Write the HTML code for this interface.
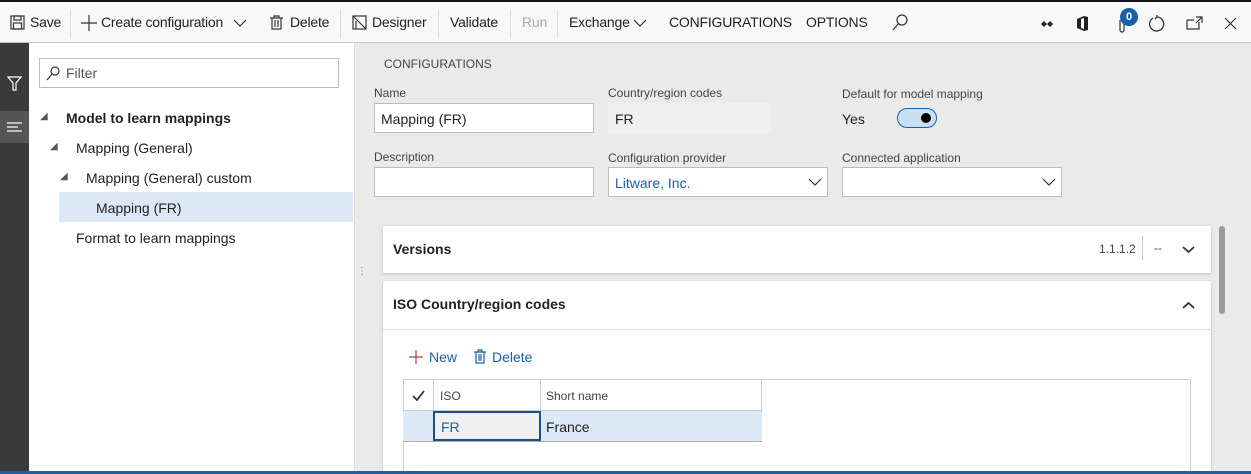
<!DOCTYPE html><html><head><style>
*{box-sizing:border-box;margin:0;padding:0}
body{width:1251px;height:474px;overflow:hidden;font-family:"Liberation Sans",sans-serif;font-size:14px;color:#222;background:#eaeaea;position:relative}
.a{position:absolute}
.tb{left:0;top:0;width:1251px;height:43px;background:#f8f8f8;border-top:2px solid #111;border-bottom:1px solid #c8c8c8}
.tb span{position:absolute;top:12px;font-size:14px;color:#222;letter-spacing:-.2px}
.tb svg{position:absolute}
.sep{position:absolute;top:8px;width:1px;height:28px;background:#ddd}
.lbl{font-size:12px;color:#444}
.inp{background:#fff;border:1px solid #bbb;height:30px;font-size:14px;padding:7px 6px}
.card{background:#fff;box-shadow:0 1px 3px rgba(0,0,0,.2)}
svg{fill:none;stroke:#333;stroke-width:1.2}
</style></head><body>
<div class="a tb">
<svg style="left:10px;top:13px" width="15" height="15"><rect x="1" y="1" width="13" height="13"/><rect x="4" y="1" width="7" height="4"/><rect x="3.5" y="8" width="8" height="6"/></svg><span style="left:30px">Save</span>
<div class="sep" style="left:70px"></div>
<svg style="left:81px;top:13px" width="16" height="16"><path d="M8 0V16M0 8H16"/></svg><span style="left:101px">Create configuration</span>
<svg style="left:233px;top:17px" width="14" height="8"><path d="M1 1L7 7L13 1"/></svg>
<svg style="left:270px;top:13px" width="13" height="15"><path d="M0 3H13M4 3V1H9V3M2 3V14H11V3M5 5V12M8 5V12"/></svg><span style="left:290px">Delete</span>
<div class="sep" style="left:340px"></div>
<svg style="left:352px;top:13px" width="15" height="15"><rect x="1" y="1" width="13" height="13"/><path d="M1 1L14 14M4 14V6"/></svg><span style="left:372px">Designer</span>
<div class="sep" style="left:438px"></div>
<span style="left:450px">Validate</span>
<div class="sep" style="left:510px"></div>
<span style="left:522px;color:#aaa">Run</span>
<div class="sep" style="left:557px"></div>
<span style="left:569px">Exchange</span>
<svg style="left:633px;top:17px" width="14" height="8"><path d="M1 1L7 7L13 1"/></svg>
<span style="left:669px">CONFIGURATIONS</span>
<span style="left:806px">OPTIONS</span>
<svg style="left:892px;top:12px" width="16" height="18"><circle cx="10" cy="6" r="5"/><path d="M6.5 9.5L1 16"/></svg>
<svg style="left:1040px;top:17px" width="14" height="10" style="stroke:none"><path d="M1 5L4 2L7 5L4 8Z M7 5L10 2L13 5L10 8Z" fill="#222" stroke="none"/></svg>
<svg style="left:1076px;top:13px" width="13" height="17"><path d="M1 4L8 1L12 2V15L8 16L1 13Z" fill="#222" stroke="none"/><path d="M5 4V13L8 14V3Z" fill="#fff" stroke="none"/></svg>
<svg style="left:1117px;top:14px" width="10" height="18"><path d="M3 4V14A2 2 0 0 0 7 14V4"/></svg>
<div class="a" style="left:1120px;top:6px;width:18px;height:18px;border-radius:9px;background:#1a5fa8;color:#fff;font-size:11px;text-align:center;line-height:18px;font-weight:bold">0</div>
<svg style="left:1148px;top:13px" width="18" height="18"><path d="M5 3A7 7 0 1 0 9 2M9 2L9 0M9 2L7 4" stroke-width="1.3"/></svg>
<svg style="left:1186px;top:14px" width="17" height="14"><path d="M1 4V13H13V6M1 4H8M10 1H16V7M16 1L10 7"/></svg>
<svg style="left:1224px;top:15px" width="13" height="13"><path d="M1 1L12 12M12 1L1 12"/></svg>
</div>
<div class="a" style="left:0;top:43px;width:29px;height:431px;background:#3a3a3a"></div>
<div class="a" style="left:0;top:111px;width:29px;height:32px;background:#555"></div>
<svg class="a" style="left:7px;top:76px;stroke:#fff" width="15" height="15"><path d="M1 1H14L9 7V14H6V7Z"/></svg>
<svg class="a" style="left:7px;top:122px;stroke:#fff" width="15" height="10"><path d="M0 1H15M0 5H11M0 9H15"/></svg>
<div class="a" style="left:29px;top:43px;width:325px;height:431px;background:#fff"></div>
<div class="a inp" style="left:39px;top:58px;width:300px;padding:6px 8px 6px 26px;color:#555">Filter</div>
<svg class="a" style="left:46px;top:66px" width="14" height="15"><circle cx="9" cy="5" r="4"/><path d="M6 8L1 14"/></svg>
<div class="a" style="left:59px;top:192px;width:294px;height:30px;background:#dce8f5"></div>
<div class="a" style="left:40px;top:111px;font-size:10px;color:#555">&#9698;</div><div class="a" style="left:66px;top:110px;font-weight:bold">Model to learn mappings</div>
<div class="a" style="left:50px;top:141px;font-size:10px;color:#555">&#9698;</div><div class="a" style="left:76px;top:140px">Mapping (General)</div>
<div class="a" style="left:60px;top:171px;font-size:10px;color:#555">&#9698;</div><div class="a" style="left:86px;top:170px">Mapping (General) custom</div>
<div class="a" style="left:96px;top:200px">Mapping (FR)</div>
<div class="a" style="left:76px;top:230px">Format to learn mappings</div>
<div class="a" style="left:354px;top:43px;width:1px;height:431px;background:#ddd"></div>
<div class="a lbl" style="left:384px;top:57px">CONFIGURATIONS</div>
<div class="a lbl" style="left:374px;top:86px">Name</div>
<div class="a inp" style="left:374px;top:103px;width:220px">Mapping (FR)</div>
<div class="a lbl" style="left:608px;top:86px">Country/region codes</div>
<div class="a inp" style="left:608px;top:103px;width:163px;background:#f0f0f0;border-color:#f0f0f0">FR</div>
<div class="a lbl" style="left:842px;top:87px">Default for model mapping</div>
<div class="a" style="left:842px;top:111px">Yes</div>
<div class="a" style="left:897px;top:108px;width:40px;height:20px;border:1px solid #1a5fa8;border-radius:10px;background:#c7e0f4"></div>
<div class="a" style="left:921px;top:113px;width:10px;height:10px;border-radius:5px;background:#000"></div>
<div class="a lbl" style="left:374px;top:150px">Description</div>
<div class="a inp" style="left:374px;top:167px;width:220px"></div>
<div class="a lbl" style="left:608px;top:151px">Configuration provider</div>
<div class="a inp" style="left:608px;top:167px;width:220px;color:#1a5fa8">Litware, Inc.</div>
<svg class="a" style="left:808px;top:178px" width="14" height="8"><path d="M1 1L7 7L13 1"/></svg>
<div class="a lbl" style="left:842px;top:151px">Connected application</div>
<div class="a inp" style="left:842px;top:167px;width:220px"></div>
<svg class="a" style="left:1042px;top:178px" width="14" height="8"><path d="M1 1L7 7L13 1"/></svg>
<div class="a card" style="left:383px;top:226px;width:828px;height:47px"></div>
<div class="a" style="left:393px;top:241px;font-weight:bold;font-size:14px">Versions</div>
<div class="a" style="left:1099px;top:242px;font-size:12px;color:#444">1.1.1.2</div>
<div class="a" style="left:1142px;top:236px;width:1px;height:24px;background:#ccc"></div>
<div class="a" style="left:1154px;top:241px;font-size:12px;color:#444">--</div>
<svg class="a" style="left:1182px;top:246px;stroke-width:1.8" width="13" height="8"><path d="M1 1L6.5 6L12 1"/></svg>
<div class="a card" style="left:383px;top:281px;width:828px;height:193px"></div>
<div class="a" style="left:393px;top:296px;font-weight:bold">ISO Country/region codes</div>
<svg class="a" style="left:1182px;top:301px;stroke-width:1.8" width="13" height="8"><path d="M1 7L6.5 2L12 7"/></svg>
<div class="a" style="left:383px;top:329px;width:828px;height:1px;background:#ddd"></div>
<svg class="a" style="left:409px;top:350px;stroke:#a44" width="14" height="14"><path d="M7 0V14M0 7H14"/></svg>
<div class="a" style="left:429px;top:349px;color:#1a5fa8">New</div>
<svg class="a" style="left:474px;top:349px;stroke:#1a5fa8" width="12" height="15"><path d="M0 3H12M4 3V1H8V3M2 3V14H10V3M5 5V12M7 5V12"/></svg>
<div class="a" style="left:492px;top:349px;color:#1a5fa8">Delete</div>
<div class="a" style="left:403px;top:379px;width:788px;height:95px;border:1px solid #ccc;border-bottom:none"></div>
<div class="a" style="left:403px;top:379px;width:359px;height:63px;border:1px solid #ccc"></div>
<div class="a" style="left:403px;top:411px;width:359px;height:31px;background:#dce8f5;border-bottom:1px solid #aaa"></div>
<div class="a" style="left:433px;top:380px;width:1px;height:31px;background:#ccc"></div>
<div class="a" style="left:540px;top:380px;width:1px;height:31px;background:#ccc"></div>
<div class="a" style="left:403px;top:410px;width:359px;height:1px;background:#ccc"></div>
<svg class="a" style="left:412px;top:390px;stroke-width:1.8" width="13" height="11"><path d="M1 6L5 10L12 1"/></svg>
<div class="a lbl" style="left:440px;top:389px">ISO</div>
<div class="a lbl" style="left:546px;top:389px">Short name</div>
<div class="a" style="left:433px;top:411px;width:108px;height:30px;background:#f0f0f0;border:2px solid #1a4f8a;padding:6px 6px;color:#1a5fa8">FR</div>
<div class="a" style="left:546px;top:419px">France</div>
<div class="a" style="left:1219px;top:226px;width:6px;height:88px;border-radius:3px;background:#999"></div>
<div class="a" style="left:357px;top:266px;font-size:10px;color:#777">&#8942;</div>
<div class="a" style="left:0;top:471px;width:1251px;height:3px;background:#1a5fa8"></div>
</body></html>
